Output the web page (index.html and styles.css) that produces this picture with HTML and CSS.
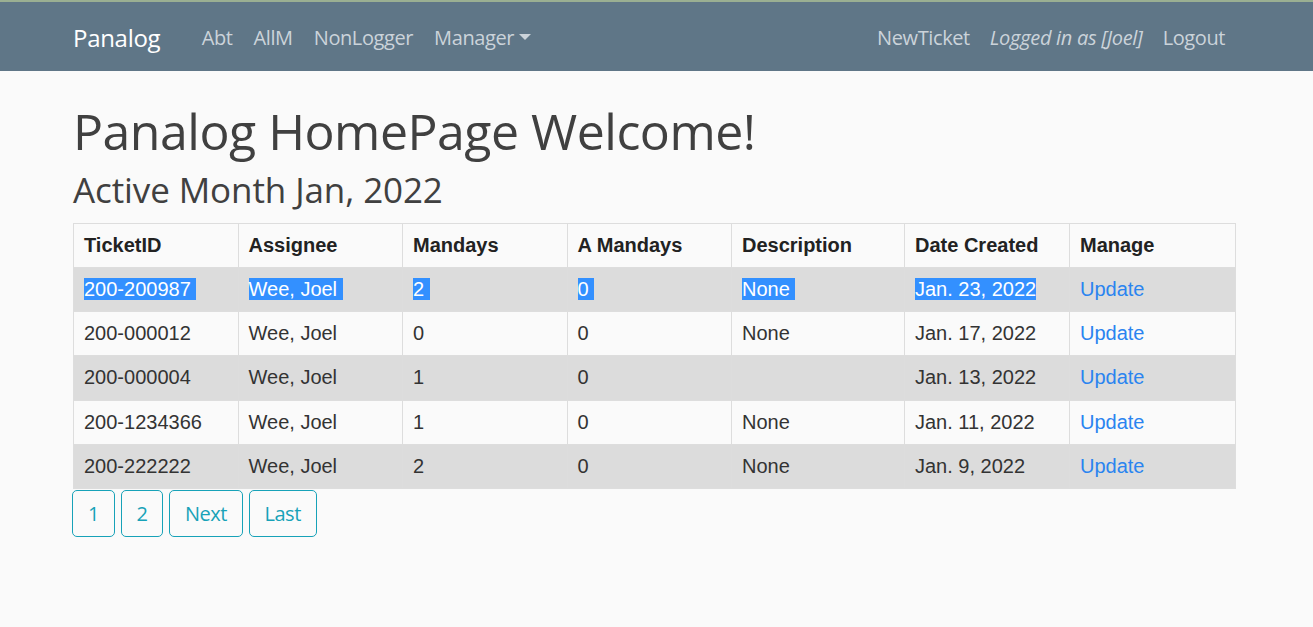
FILE: index.html
```html
<!DOCTYPE html>
<html lang="en">
<head>
<meta charset="utf-8">
<title>Panalog</title>
<link rel="stylesheet" href="styles.css">
</head>
<body>
<nav class="navbar">
  <div class="nav-left">
    <a class="brand" href="#">Panalog</a>
    <a class="nav-link" href="#">Abt</a>
    <a class="nav-link" href="#">AllM</a>
    <a class="nav-link" href="#">NonLogger</a>
    <a class="nav-link dropdown" href="#">Manager<span class="caret"></span></a>
  </div>
  <div class="nav-right">
    <a class="nav-link" href="#">NewTicket</a>
    <span class="nav-link user">Logged in as [Joel]</span>
    <a class="nav-link" href="#">Logout</a>
  </div>
</nav>
<main class="container">
  <h1 class="title">Panalog HomePage Welcome!</h1>
  <h3 class="subtitle">Active Month Jan, 2022</h3>
  <table class="tickets">
    <colgroup>
      <col class="c1"><col class="c2"><col class="c3"><col class="c4"><col class="c5"><col class="c6"><col class="c7">
    </colgroup>
    <thead>
      <tr><th>TicketID</th><th>Assignee</th><th>Mandays</th><th>A Mandays</th><th>Description</th><th>Date Created</th><th>Manage</th></tr>
    </thead>
    <tbody>
      <tr class="odd"><td><span class="sel">200-200987&nbsp;</span></td><td><span class="sel">Wee, Joel&nbsp;</span></td><td><span class="sel">2&nbsp;</span></td><td><span class="sel">0&nbsp;</span></td><td><span class="sel">None&nbsp;</span></td><td><span class="sel">Jan. 23, 2022</span></td><td><a class="upd" href="#">Update</a></td></tr>
      <tr><td>200-000012</td><td>Wee, Joel</td><td>0</td><td>0</td><td>None</td><td>Jan. 17, 2022</td><td><a class="upd" href="#">Update</a></td></tr>
      <tr class="odd"><td>200-000004</td><td>Wee, Joel</td><td>1</td><td>0</td><td></td><td>Jan. 13, 2022</td><td><a class="upd" href="#">Update</a></td></tr>
      <tr><td>200-1234366</td><td>Wee, Joel</td><td>1</td><td>0</td><td>None</td><td>Jan. 11, 2022</td><td><a class="upd" href="#">Update</a></td></tr>
      <tr class="odd"><td>200-222222</td><td>Wee, Joel</td><td>2</td><td>0</td><td>None</td><td>Jan. 9, 2022</td><td><a class="upd" href="#">Update</a></td></tr>
    </tbody>
  </table>
  <div class="pager">
    <a class="pbtn" href="#">1</a>
    <a class="pbtn" href="#">2</a>
    <a class="pbtn" href="#">Next</a>
    <a class="pbtn" href="#">Last</a>
  </div>
</main>
</body>
</html>
```
FILE: styles.css
```css
* { box-sizing: border-box; }
html, body { margin: 0; padding: 0; }
body {
  background: #fafafa;
  font-family: "Open Sans", "Noto Sans", sans-serif;
  color: #404040;
}
a { text-decoration: none; }

.navbar {
  height: 71px;
  background: #5f7687;
  border-top: 2px solid #9aaf92;
  display: flex;
  justify-content: space-between;
  align-items: center;
  padding: 1px 78px 0 73px;
}
.nav-left, .nav-right { display: flex; align-items: center; }
.brand {
  color: #fff;
  font-size: 24px;
  margin-right: 31px;
  letter-spacing: -0.3px;
}
.nav-link {
  color: #cbd3da;
  font-size: 20px;
  padding: 0 10px;
  letter-spacing: -0.4px;
}
.nav-left .nav-link { padding: 0 10.5px; }
.user { font-style: italic; letter-spacing: -0.3px; }
.caret {
  display: inline-block;
  margin-left: 5px;
  vertical-align: 5px;
  border-top: 6px solid #cbd3da;
  border-left: 6px solid transparent;
  border-right: 6px solid transparent;
}

.container {
  margin: 0 78px 0 73px;
}
.title {
  font-size: 50px;
  font-weight: 400;
  margin: 27px 0 0;
  line-height: 66px;
  letter-spacing: -0.5px;
}
.subtitle {
  font-size: 35px;
  font-weight: 400;
  margin: 3px 0 10px;
  line-height: 46px;
  letter-spacing: -0.1px;
}

.tickets {
  width: 1162px;
  border-collapse: collapse;
  font-family: "Liberation Sans", Arial, sans-serif;
  font-size: 20px;
  color: #333;
  table-layout: fixed;
}
.c1, .c2, .c3, .c4 { width: 164.5px; }
.c5 { width: 173px; }
.c6 { width: 165px; }
.c7 { width: 166px; }
.tickets th, .tickets td {
  border: 1px solid #dddddd;
  text-align: left;
  padding: 10px 10px 10.2px;
  line-height: 23px;
  white-space: nowrap;
}
.tickets th { font-weight: 700; color: #222; padding: 10px 10px 10px; }
.tickets tr.odd td { background: #dcdcdc; }
.sel { background: #3390ff; color: #fff; }
.upd { color: #2a84f0; }

.pager {
  display: flex;
  gap: 5.6px;
  padding-top: 1px;
  margin-left: -1px;
}
.pbtn {
  display: inline-block;
  border: 1px solid #17a2b8;
  border-radius: 5px;
  color: #17a2b8;
  font-size: 20px;
  line-height: 30px;
  padding: 8px 15px 7px;
  letter-spacing: -0.5px;
}
```
